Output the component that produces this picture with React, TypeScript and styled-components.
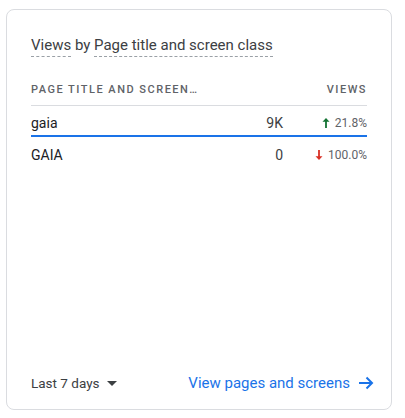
import React from 'react';
import styled, { createGlobalStyle } from 'styled-components';

const rows = [
  { title: 'gaia', views: '9K', change: '21.8%', up: true, active: true },
  { title: 'GAIA', views: '0', change: '100.0%', up: false, active: false },
];

const App: React.FC = () => {
  return (
    <>
      <GlobalStyle />
      <Card>
        <Title>
          <Dotted>Views</Dotted> by <Dotted>Page title and screen class</Dotted>
        </Title>
        <Table>
          <HeadRow>
            <HeadCell>Page title and screen…</HeadCell>
            <HeadCell $right>Views</HeadCell>
          </HeadRow>
          {rows.map((r) => (
            <Row key={r.title} $active={r.active}>
              <NameCell>{r.title}</NameCell>
              <ValueCell>{r.views}</ValueCell>
              <ChangeCell>
                <Arrow $up={r.up}>
                  <svg width="8" height="10" viewBox="0 0 8 10">
                    {r.up ? (
                      <path d="M4 0 L7.5 3.8 H4.9 V10 H3.1 V3.8 H0.5 Z" fill="currentColor" />
                    ) : (
                      <path d="M4 10 L7.5 6.2 H4.9 V0 H3.1 V6.2 H0.5 Z" fill="currentColor" />
                    )}
                  </svg>
                </Arrow>
                {r.change}
              </ChangeCell>
            </Row>
          ))}
        </Table>
        <Footer>
          <RangeButton>
            Last 7 days
            <svg width="10" height="5" viewBox="0 0 10 5">
              <path d="M0 0 H10 L5 5 Z" fill="currentColor" />
            </svg>
          </RangeButton>
          <ViewLink>
            View pages and screens
            <svg width="16" height="16" viewBox="0 0 16 16">
              <path d="M1 8 H14 M8.5 2.5 L14 8 L8.5 13.5" stroke="currentColor" strokeWidth="2" fill="none" />
            </svg>
          </ViewLink>
        </Footer>
      </Card>
    </>
  );
};

export default App;

const GlobalStyle = createGlobalStyle`
  body {
    margin: 0;
    background: #ffffff;
    font-family: Roboto, "Liberation Sans", sans-serif;
  }
`;

const Card = styled.div`
  box-sizing: border-box;
  margin: 9px 0 0 6px;
  width: 386px;
  height: 401px;
  border: 1px solid #dadce0;
  border-radius: 8px;
  padding: 25px 24px 0 24px;
  display: flex;
  flex-direction: column;
`;

const Title = styled.div`
  font-size: 15px;
  line-height: 20px;
  color: #3c4043;
`;

const Dotted = styled.span`
  border-bottom: 1px dashed #9aa0a6;
  padding-bottom: 2px;
`;

const Table = styled.div`
  margin-top: 22px;
  display: flex;
  flex-direction: column;
  flex: 1;
`;

const HeadRow = styled.div`
  box-sizing: border-box;
  display: flex;
  justify-content: space-between;
  align-items: center;
  height: 29px;
  padding-bottom: 4px;
  border-bottom: 1px solid #dadce0;
`;

const HeadCell = styled.div<{ $right?: boolean }>`
  font-size: 11px;
  letter-spacing: 1.5px;
  text-transform: uppercase;
  font-weight: 500;
  color: #5f6368;
  text-align: ${(p) => (p.$right ? 'right' : 'left')};
`;

const Row = styled.div<{ $active?: boolean }>`
  box-sizing: border-box;
  display: flex;
  align-items: center;
  height: 31px;
  padding-top: 4px;
  border-bottom: 2px solid ${(p) => (p.$active ? '#1a73e8' : 'transparent')};

  & + & {
    margin-top: 1px;
  }
`;

const NameCell = styled.div`
  flex: 1;
  font-size: 14px;
  color: #202124;
`;

const ValueCell = styled.div`
  font-size: 14px;
  color: #3c4043;
  text-align: right;
`;

const ChangeCell = styled.div`
  width: 84px;
  display: flex;
  justify-content: flex-end;
  align-items: center;
  gap: 5px;
  font-size: 12px;
  color: #5f6368;
`;

const Arrow = styled.span<{ $up: boolean }>`
  display: inline-flex;
  color: ${(p) => (p.$up ? '#137333' : '#d93025')};
`;

const Footer = styled.div`
  display: flex;
  justify-content: space-between;
  align-items: center;
  height: 48px;
  margin-bottom: 2px;
`;

const RangeButton = styled.div`
  display: flex;
  align-items: center;
  gap: 7px;
  font-size: 13.5px;
  color: #3c4043;
  svg {
    color: #3c4043;
  }
`;

const ViewLink = styled.div`
  display: flex;
  align-items: center;
  gap: 8px;
  font-size: 15px;
  color: #1a73e8;
  margin-right: -7px;
`;
